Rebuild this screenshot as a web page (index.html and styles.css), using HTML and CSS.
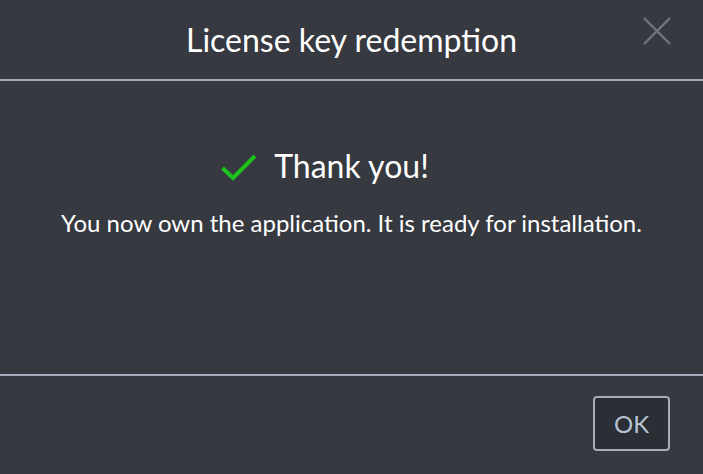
FILE: index.html
```html
<!DOCTYPE html>
<html>
<head>
<meta charset="utf-8">
<link rel="stylesheet" href="styles.css">
</head>
<body>
<div class="dialog">
  <header class="head">
    <h1 class="title">License key redemption</h1>
    <button class="close" aria-label="Close">
      <svg width="30" height="30" viewBox="0 0 30 30"><path d="M2 2 L28 28 M28 2 L2 28" stroke="#70757e" stroke-width="2.4" fill="none"/></svg>
    </button>
  </header>
  <main class="body">
    <div class="thanks">
      <svg class="check" width="36" height="28" viewBox="0 0 36 28"><path d="M1.5 15 L12 25 L34 3" stroke="#1dc31d" stroke-width="4" fill="none"/></svg>
      <span>Thank you!</span>
    </div>
    <p class="msg">You now own the application. It is ready for installation.</p>
  </main>
  <footer class="foot">
    <button class="ok">OK</button>
  </footer>
</div>
</body>
</html>
```
FILE: styles.css
```css
html, body {
  margin: 0;
  padding: 0;
  background: #363940;
}
.dialog {
  width: 703px;
  height: 474px;
  display: flex;
  flex-direction: column;
  font-family: Lato, "Noto Sans", sans-serif;
  color: #fff;
}
.head {
  height: 79px;
  border-bottom: 2px solid #a4adb9;
  display: flex;
  align-items: center;
  justify-content: center;
  position: relative;
}
.title {
  margin: 0;
  font-weight: 400;
  font-size: 32px;
  line-height: 1;
  margin-top: 0;
}
.close {
  position: absolute;
  right: 31px;
  top: 16px;
  background: none;
  border: 0;
  padding: 0;
  width: 30px;
  height: 30px;
}
.close svg { display: block; }
.body {
  height: 293px;
  display: flex;
  flex-direction: column;
  align-items: center;
}
.thanks {
  margin-top: 66px;
  display: flex;
  align-items: center;
  gap: 17px;
  font-size: 32px;
  line-height: 38px;
  margin-left: -53px;
}
.check { display: block; margin-top: 2px; }
.msg {
  margin: 24px 0 0;
  font-size: 24px;
  line-height: 28px;
}
.foot {
  flex: 1;
  border-top: 2px solid #a4adb9;
  display: flex;
  justify-content: flex-end;
  align-items: flex-start;
  padding: 20px 33px 0 0;
}
.ok {
  width: 77px;
  height: 55px;
  background: #2b2e34;
  border: 2px solid #a4adb9;
  border-radius: 4px;
  color: #b7c3d3;
  font-family: Lato, "Noto Sans", sans-serif;
  font-size: 24px;
  padding: 0;
}
```
